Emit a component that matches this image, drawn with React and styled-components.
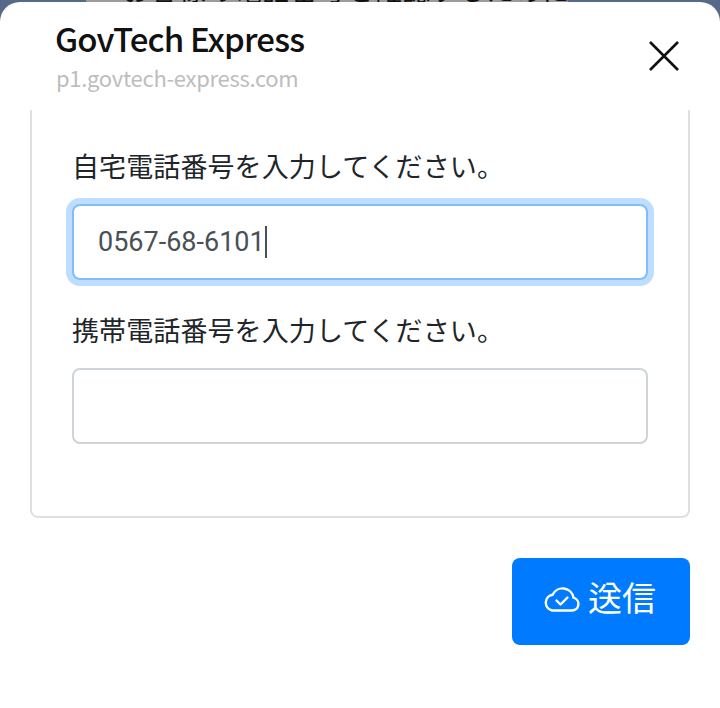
import React from "react";
import styled, { createGlobalStyle } from "styled-components";

const GlobalStyle = createGlobalStyle`
html, body {
	margin: 0;
	height: 708px;
	overflow: hidden;
	background: #56698a;
}
* {
	box-sizing: border-box;
}
`;

const Page = styled.div`
width: 720px;
height: 708px;
display: flex;
flex-direction: column;
overflow: hidden;
font-family: "Noto Sans CJK KR", "Noto Sans CJK JP", sans-serif;
`;

const Backdrop = styled.div`
height: 2px;
margin: 0 152px 0 86px;
padding-left: 36px;
background: #9c9c9c;
overflow: hidden;
flex: none;
`;

const BackdropText = styled.div`
margin-top: -25px;
font-size: 28px;
line-height: 28px;
color: #111;
white-space: nowrap;
`;

const Sheet = styled.div`
flex: 1;
background: #fff;
border-radius: 20px 20px 0 0;
display: flex;
flex-direction: column;
`;

const Header = styled.header`
height: 108px;
padding: 15px 40px 0 55px;
display: flex;
justify-content: space-between;
flex: none;
`;

const Title = styled.h1`
margin: 0;
font-family: "Noto Sans CJK KR", sans-serif;
font-size: 33px;
line-height: 42px;
font-weight: 500;
letter-spacing: -0.85px;
color: #111;
`;

const Subtitle = styled.div`
margin: 4px 0 0 1px;
font-family: "Noto Sans CJK KR", sans-serif;
font-size: 22px;
line-height: 28px;
letter-spacing: -0.3px;
color: #bdbdbd;
`;

const CloseButton = styled.button`
width: 32px;
height: 32px;
margin-top: 23px;
padding: 0;
border: 0;
background: none;
color: #111;
svg {
	display: block;
}
`;

const Body = styled.div`
padding: 0 30px;
display: flex;
flex-direction: column;
`;

const Card = styled.div`
height: 408px;
padding: 36px 40px 0;
border: 2px solid #e0e0e0;
border-top: 0;
border-radius: 0 0 8px 8px;
`;

const Field = styled.div`
margin-bottom: 30px;
`;

const Label = styled.label`
display: block;
margin-bottom: 18px;
font-size: 27px;
letter-spacing: 0.1px;
line-height: 40px;
white-space: nowrap;
color: #212529;
`;

const Input = styled.div`
height: 76px;
padding: 0 24px;
display: flex;
align-items: center;
font-family: Roboto, sans-serif;
font-size: 27px;
color: #495057;
background: #fff;
border: 2px solid ${(p) => (p.$focused ? "#80bdff" : "#ced4da")};
border-radius: 8px;
box-shadow: ${(p) => (p.$focused ? "0 0 0 6px rgba(0, 123, 255, 0.25)" : "none")};
`;

const Caret = styled.span`
width: 2px;
height: 32px;
background: #495057;
`;

const Actions = styled.div`
margin-top: 40px;
display: flex;
justify-content: flex-end;
`;

const SubmitButton = styled.button`
width: 178px;
height: 87px;
padding: 0 2px 10px 0;
display: flex;
align-items: center;
justify-content: center;
gap: 8px;
border: 0;
border-radius: 8px;
background: #007bff;
color: #fff;
font-family: "Noto Sans CJK KR", "Noto Sans CJK JP", sans-serif;
font-size: 34px;
line-height: 48px;
`;

const CloudIcon = styled.svg`
flex: none;
position: relative;
top: 3px;
`;

const CloudCheck = () => (
	<CloudIcon width="36" height="25" viewBox="0 0 36 25" fill="none" stroke="currentColor" strokeWidth="2.4" strokeLinecap="round" strokeLinejoin="round">
		<path d="M8 23.500h20a6.500 6.500 0 0 0 1.500-12.800A11 11 0 0 0 8.600 7.800 8 8 0 0 0 8 23.500z" />
		<path d="M12.500 13.500l4 4 7-7" />
	</CloudIcon>
);

const App = () => {
	return (
		<Page>
			<GlobalStyle />
			<Backdrop>
				<BackdropText>お客様の電話番号を確認するために以下の情報を</BackdropText>
			</Backdrop>
			<Sheet>
				<Header>
					<div>
						<Title>GovTech Express</Title>
						<Subtitle>p1.govtech-express.com</Subtitle>
					</div>
					<CloseButton aria-label="閉じる">
						<svg width="32" height="32" viewBox="0 0 32 32" stroke="currentColor" strokeWidth="2.6">
							<path d="M2 2l28 28M30 2L2 30" />
						</svg>
					</CloseButton>
				</Header>
				<Body>
					<Card>
						<Field>
							<Label>自宅電話番号を入力してください。</Label>
							<Input $focused>0567-68-6101<Caret /></Input>
						</Field>
						<Field>
							<Label>携帯電話番号を入力してください。</Label>
							<Input />
						</Field>
					</Card>
					<Actions>
						<SubmitButton><CloudCheck />送信</SubmitButton>
					</Actions>
				</Body>
			</Sheet>
		</Page>
	);
};

export default App;
